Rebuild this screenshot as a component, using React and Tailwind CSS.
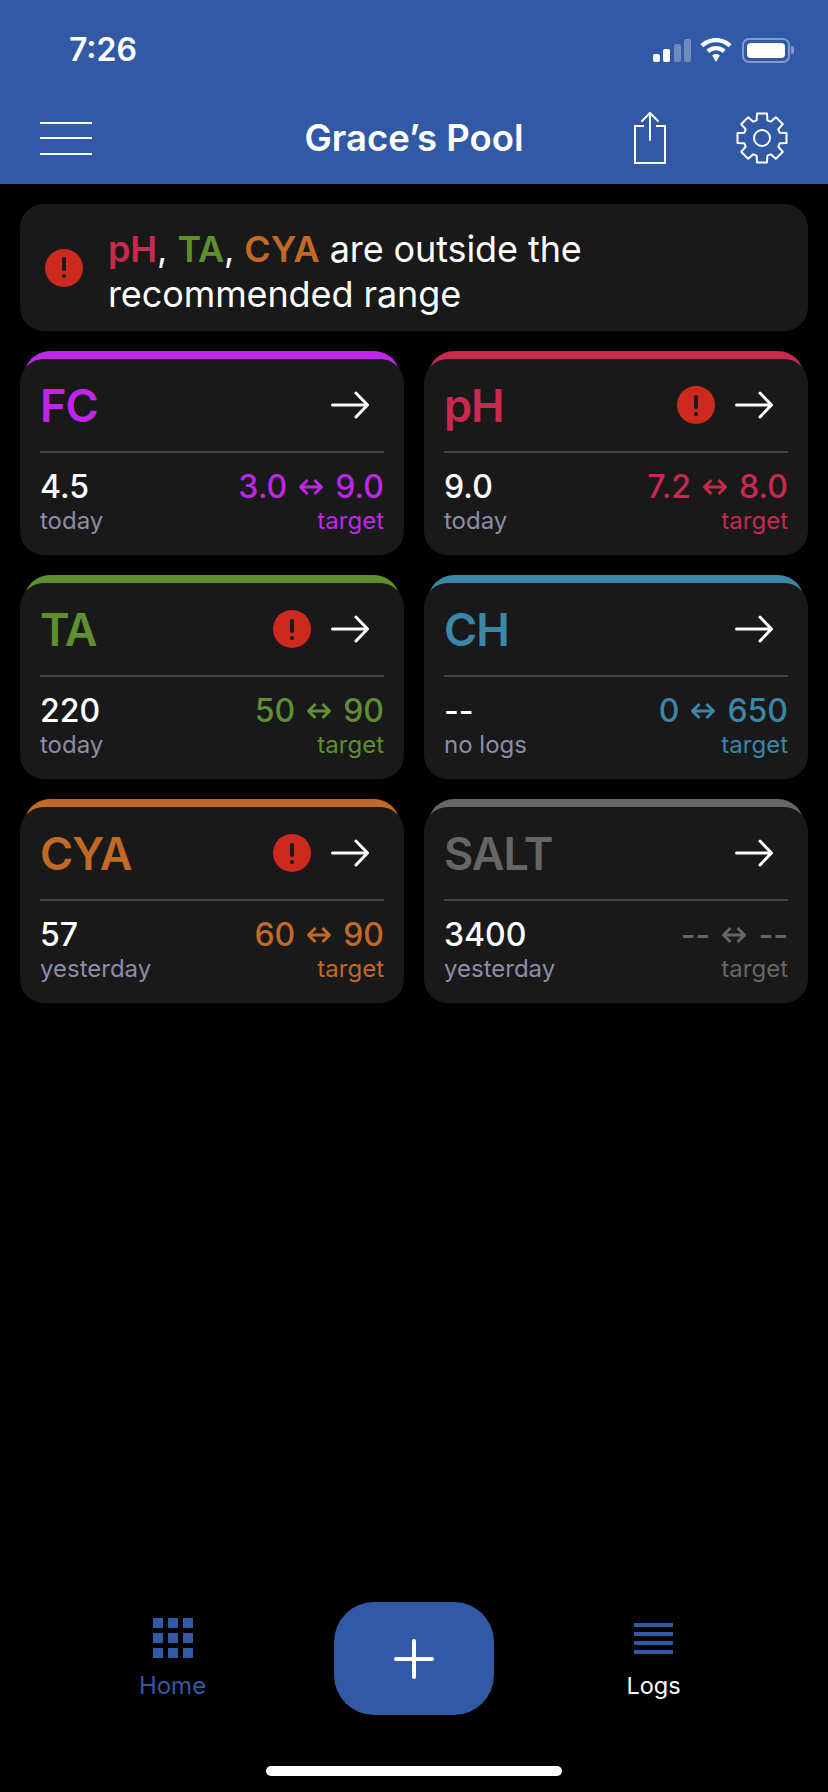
import React from 'react'

const font = { fontFamily: 'Inter, "Noto Sans", sans-serif' }

// eight tooth gear outline, built from polar points
function gearPath() {
  const cx = 26, cy = 26, outer = 25, inner = 18.5, teeth = 8
  const pts = []
  for (let i = 0; i < teeth; i++) {
    const a = (i * 2 * Math.PI) / teeth - Math.PI / 2
    const w = 0.2
    const gap = 0.27
    pts.push([a - w - gap * 0.35, inner], [a - w, outer], [a + w, outer], [a + w + gap * 0.35, inner])
  }
  return (
    pts
      .map(([a, r], i) => `${i === 0 ? 'M' : 'L'}${(cx + r * Math.cos(a)).toFixed(2)} ${(cy + r * Math.sin(a)).toFixed(2)}`)
      .join(' ') + ' Z'
  )
}

const cards = [
  { name: 'FC', value: '4.5', when: 'today', low: '3.0', high: '9.0', title: 'text-[#bf26ea]', band: 'bg-[#bf26ea]', target: 'text-[#bf26ea]', alert: false },
  { name: 'pH', value: '9.0', when: 'today', low: '7.2', high: '8.0', title: 'text-[#c9294f]', band: 'bg-[#c9294f]', target: 'text-[#c9294f]', alert: true },
  { name: 'TA', value: '220', when: 'today', low: '50', high: '90', title: 'text-[#5f8f2e]', band: 'bg-[#5f8f2e]', target: 'text-[#5f8f2e]', alert: true },
  { name: 'CH', value: '--', when: 'no logs', low: '0', high: '650', title: 'text-[#3a87a8]', band: 'bg-[#3a87a8]', target: 'text-[#3a87a8]', alert: false },
  { name: 'CYA', value: '57', when: 'yesterday', low: '60', high: '90', title: 'text-[#c26a25]', band: 'bg-[#c26a25]', target: 'text-[#c26a25]', alert: true },
  { name: 'SALT', value: '3400', when: 'yesterday', low: '--', high: '--', title: 'text-[#666666]', band: 'bg-[#666666]', target: 'text-[#666666]', alert: false },
]

function AlertDot() {
  return (
    <div className="w-[38px] h-[38px] rounded-full bg-[#cc2a1f] flex flex-col items-center justify-center shrink-0">
      <div className="w-[4px] h-[14px] rounded-full bg-[#191919]" />
      <div className="w-[4px] h-[4px] rounded-full bg-[#191919] mt-[3px]" />
    </div>
  )
}

function Arrow() {
  return (
    <svg width="38" height="28" viewBox="0 0 38 28" fill="none" stroke="white" strokeWidth="3" strokeLinecap="round" strokeLinejoin="round">
      <path d="M1.500 14H36.500M25 2L36.500 14L25 26" />
    </svg>
  )
}

function RangeArrow() {
  return (
    <svg width="26" height="18" viewBox="0 0 26 18" fill="none" stroke="currentColor" strokeWidth="3" strokeLinejoin="round">
      <path d="M2 9H24M9.500 2L2.500 9L9.500 16M16.500 2L23.500 9L16.500 16" />
    </svg>
  )
}

function Card({ card }) {
  return (
    <div className="flex flex-col">
      <div className={`h-[30px] mx-[4px] rounded-t-[26px] ${card.band}`} />
      <div className="relative -mt-[22px] h-[196px] rounded-[24px] bg-[#191919] px-[20px]">
        <div className="h-[94px] flex items-center border-b-2 border-[#444444]">
          <span className={`text-[45px] leading-none font-semibold tracking-[-1px] ${card.title}`}>{card.name}</span>
          <div className="ml-auto flex items-center gap-[20px] pr-[15px]">
            {card.alert && <AlertDot />}
            <Arrow />
          </div>
        </div>
        <div className="flex justify-between pt-[14px]">
          <div>
            <div className="text-[32px] leading-[39px] font-medium text-white">{card.value}</div>
            <div className="text-[24px] leading-[30px] text-[#8e8ca8]">{card.when}</div>
          </div>
          <div className="text-right">
            <div className={`h-[39px] flex items-center justify-end gap-[11px] text-[32px] leading-[39px] font-medium ${card.target}`}>
              <span>{card.low}</span>
              <RangeArrow />
              <span>{card.high}</span>
            </div>
            <div className={`text-[24px] leading-[30px] ${card.target}`}>target</div>
          </div>
        </div>
      </div>
    </div>
  )
}

export default function App() {
  return (
    <div style={font} className="h-[1792px] w-[828px] bg-black flex flex-col text-white overflow-hidden">
      <header className="h-[184px] bg-[#3259a5] shrink-0">
        <div className="h-[92px] pt-[8px] flex items-center pl-[69px] pr-[34px]">
          <span className="text-[32px] font-semibold leading-none">7:26</span>
          <div className="ml-auto flex items-center gap-[9px]">
            <div className="flex items-end gap-[3.5px] h-[23px]">
              <div className="w-[7px] h-[8px] rounded-[2px] bg-white" />
              <div className="w-[7px] h-[13px] rounded-[2px] bg-white" />
              <div className="w-[7px] h-[18px] rounded-[2px] bg-white/30" />
              <div className="w-[7px] h-[23px] rounded-[2px] bg-white/30" />
            </div>
            <svg width="32" height="24" viewBox="0 0 32 24" fill="white">
              <path d="M16 0C10 0 4.500 2.300 0.500 6.200L3.400 9.300C6.700 6.100 11.100 4.200 16 4.200C20.900 4.200 25.300 6.100 28.600 9.300L31.500 6.200C27.500 2.300 22 0 16 0Z" />
              <path d="M16 8C12.300 8 8.900 9.400 6.400 11.800L9.300 14.900C11.100 13.200 13.400 12.200 16 12.200C18.600 12.200 20.900 13.200 22.700 14.900L25.600 11.800C23.100 9.400 19.700 8 16 8Z" />
              <path d="M16 16C14.500 16 13.200 16.600 12.200 17.500L16 24L19.800 17.500C18.800 16.600 17.500 16 16 16Z" />
            </svg>
            <div className="flex items-center ml-[1px]">
              <div className="w-[48px] h-[25px] rounded-[7px] border-2 border-white/40 p-[3px]">
                <div className="w-full h-full rounded-[4px] bg-white" />
              </div>
              <div className="w-[3px] h-[8px] rounded-r-[2px] bg-white/40 ml-[1px]" />
            </div>
          </div>
        </div>
        <div className="h-[92px] grid grid-cols-[1fr_auto_1fr] items-center px-[40px]">
          <div className="w-[52px] h-[33px] flex flex-col justify-between">
            <div className="h-[2px] bg-white" />
            <div className="h-[2px] bg-white" />
            <div className="h-[2px] bg-white" />
          </div>
          <h1 className="text-[36.5px] font-semibold leading-none">Grace’s Pool</h1>
          <div className="flex items-center justify-end gap-[70px]">
            <svg width="32" height="52" viewBox="0 0 32 52" fill="none" stroke="white" strokeWidth="2">
              <path d="M10 14H1V51H31V14H22" />
              <path d="M16 1V28M8 9L16 1L24 9" strokeLinecap="round" strokeLinejoin="round" />
            </svg>
            <svg width="52" height="52" viewBox="0 0 52 52" fill="none" stroke="white" strokeWidth="2" strokeLinejoin="round">
              <path d={gearPath()} />
              <circle cx="26" cy="26" r="8" />
            </svg>
          </div>
        </div>
      </header>

      <main className="flex-1 px-[20px] pt-[20px]">
        <div className="h-[127px] rounded-[24px] bg-[#191919] flex items-center pl-[25px] gap-[25px]">
          <AlertDot />
          <p className="text-[36px] leading-[45px] tracking-[-0.1px] pt-[8px]">
            <span className="font-semibold text-[#c9294f]">pH</span>, <span className="font-semibold text-[#5f8f2e]">TA</span>,{' '}
            <span className="font-semibold text-[#c26a25]">CYA</span> are outside the
            <br />
            recommended range
          </p>
        </div>
        <div className="grid grid-cols-2 gap-x-[20px] gap-y-[20px] mt-[20px]">
          {cards.map((card) => (
            <Card key={card.name} card={card} />
          ))}
        </div>
      </main>

      <nav className="h-[190px] shrink-0 flex flex-col items-center">
        <div className="w-full h-[113px] grid grid-cols-3 items-center">
          <div className="flex flex-col items-center pl-[69px] pt-[2px] text-[#3259a5]">
            <div className="grid grid-cols-3 gap-x-[5px] gap-y-[5px]">
              {Array.from({ length: 9 }).map((_, i) => (
                <div key={i} className="w-[10px] h-[10px] bg-[#3259a5]" />
              ))}
            </div>
            <span className="text-[24px] leading-[30px] mt-[13px]">Home</span>
          </div>
          <div className="flex justify-center">
            <button className="w-[160px] h-[113px] rounded-[40px] bg-[#3259a5] flex items-center justify-center">
              <svg width="40" height="40" viewBox="0 0 40 40" stroke="white" strokeWidth="4" strokeLinecap="round">
                <path d="M20 2V38M2 20H38" />
              </svg>
            </button>
          </div>
          <div className="flex flex-col items-center pr-[73px] pt-[2px]">
            <div className="w-[39px] h-[40px] flex flex-col justify-center gap-[5px]">
              <div className="h-[4px] bg-[#3259a5]" />
              <div className="h-[4px] bg-[#3259a5]" />
              <div className="h-[4px] bg-[#3259a5]" />
              <div className="h-[4px] bg-[#3259a5]" />
            </div>
            <span className="text-[23.5px] leading-[30px] mt-[13px]">Logs</span>
          </div>
        </div>
        <div className="w-[296px] h-[10px] rounded-full bg-white mt-[51px]" />
      </nav>
    </div>
  )
}
